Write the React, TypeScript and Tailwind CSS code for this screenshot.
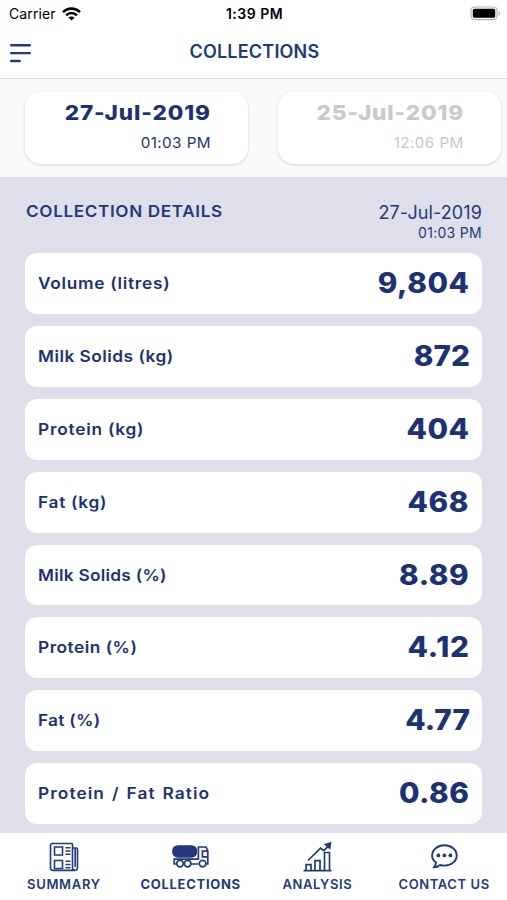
import type { ReactNode } from "react";

interface Row {
  label: string;
  value: string;
  labelClass: string;
  valueClass: string;
}

const rows: Row[] = [
  { label: "Volume (litres)", value: "9,804", labelClass: "tracking-[0.65px]", valueClass: "tracking-[0.5px]" },
  { label: "Milk Solids (kg)", value: "872", labelClass: "tracking-[0.45px]", valueClass: "tracking-[0px]" },
  { label: "Protein (kg)", value: "404", labelClass: "tracking-[0.71px]", valueClass: "tracking-[0.5px]" },
  { label: "Fat (kg)", value: "468", labelClass: "tracking-[0.65px]", valueClass: "tracking-[0.6px]" },
  { label: "Milk Solids (%)", value: "8.89", labelClass: "tracking-[0.24px]", valueClass: "tracking-[0.5px]" },
  { label: "Protein (%)", value: "4.12", labelClass: "tracking-[0.45px]", valueClass: "tracking-[0.7px]" },
  { label: "Fat (%)", value: "4.77", labelClass: "tracking-[0.25px]", valueClass: "tracking-[0px]" },
  { label: "Protein / Fat Ratio", value: "0.86", labelClass: "tracking-[1px] [word-spacing:1.4px]", valueClass: "tracking-[0.4px]" },
];

function StatusBar() {
  return (
    <div className="flex h-[27px] items-center justify-between pl-[9px] pr-[6px] text-black">
      <div className="flex w-[180px] items-center gap-[6px]">
        <span className="text-[14px] leading-none tracking-[0.1px]">Carrier</span>
        <svg width="19" height="14" viewBox="0 0 19 14" fill="none" stroke="currentColor" strokeWidth="2.6">
          <path d="M1 5.2C5.8.4 13.2.4 18 5.2" />
          <path d="M4.1 8.3c3.1-3 7.7-3 10.8 0" />
          <path d="M9.5 13.6 6.4 10.6c1.8-1.6 4.4-1.6 6.2 0Z" fill="currentColor" stroke="none" />
        </svg>
      </div>
      <span className="mr-[1px] text-[14px] leading-none font-semibold tracking-[0.5px] whitespace-nowrap">1:39 PM</span>
      <div className="flex w-[180px] justify-end">
        <svg width="31" height="15" viewBox="0 0 31 15" fill="none">
          <rect x="1" y="1" width="26" height="12.6" rx="3.5" stroke="#b5b5b5" strokeWidth="1.2" />
          <rect x="2.8" y="2.8" width="22.4" height="9" rx="1.6" fill="#000" />
          <path d="M28.6 5.2c2 .7 2 3.6 0 4.3Z" fill="#b5b5b5" />
        </svg>
      </div>
    </div>
  );
}

function Header() {
  return (
    <header className="flex h-[52px] items-center border-b border-[#dcdcdc] pl-[10px]">
      <svg width="22" height="20" viewBox="0 0 22 20" stroke="#223a7b" strokeWidth="2.4" strokeLinecap="round">
        <path d="M1.2 2.2h18.6M1.2 10.1h18.6M1.2 18h8.4" />
      </svg>
      <h1 className="ml-[157.5px] text-[18px] leading-none font-semibold tracking-[0.2px] -mt-px">COLLECTIONS</h1>
    </header>
  );
}

function DateCard({ date, time, active }: { date: string; time: string; active?: boolean }) {
  return (
    <button
      className={`flex h-[73px] w-[223px] shrink-0 flex-col items-end rounded-[16px] bg-white pr-[37px] pt-[10px] shadow-[0_1px_3px_rgba(0,0,0,0.16)] ${
        active ? "text-[#1d3274]" : "text-[#c9c9c9]"
      }`}
    >
      <span className="origin-right scale-x-110 text-[20.5px] leading-[24px] font-extrabold tracking-[0.8px]">{date}</span>
      <span className="mt-[9px] origin-right scale-x-105 text-[14.5px] leading-[18px] tracking-[0.4px]">{time}</span>
    </button>
  );
}

function DetailRow({ row }: { row: Row }) {
  return (
    <li className="flex h-[60.9px] items-center justify-between rounded-[12px] bg-white pl-[13px] pr-[12.5px] pb-px">
      <span className={`origin-left scale-x-[1.08] text-[16px] font-semibold ${row.labelClass}`}>{row.label}</span>
      <span className={`origin-right scale-x-[1.06] text-[28px] font-extrabold ${row.valueClass}`}>{row.value}</span>
    </li>
  );
}

function SummaryIcon() {
  return (
    <svg width="30" height="30" viewBox="0 0 30 30" fill="none" stroke="currentColor" strokeWidth="1.6">
      <path d="M3 1.5h19.5a1 1 0 0 1 1 1v23.3a2.5 2.5 0 0 0 5 0V7a1 1 0 0 0-1-1h-4M26.2 6v19M1.5 3v22.8a2.5 2.5 0 0 0 2.5 2.6h22" />
      <path d="M1.5 3.2A1.7 1.7 0 0 1 3.2 1.5" />
      <path d="M5.5 5h8v8h-8zM5.5 18.5h8v8h-8zM16.5 5.7h5M16.5 9h5M16.5 12.3h5M16.5 19.2h5M16.5 22.5h5M16.5 25.8h5" />
    </svg>
  );
}

function TruckIcon() {
  return (
    <svg width="37" height="23" viewBox="0 0 37 23" fill="none" stroke="currentColor" strokeWidth="1.7">
      <rect x="1" y="1" width="23.4" height="10.8" rx="4.8" fill="currentColor" />
      <path d="M4.5 19H2.2v-4.8H26M18.5 19h8M26.4 15V2h7.6l1.8 4v13h-2M35.5 6.2H30.4v5.6h5.2" />
      <g fill="#fff">
        <circle cx="8" cy="18.6" r="3.3" />
        <circle cx="15.6" cy="18.6" r="3.3" />
        <circle cx="30.6" cy="18.6" r="3.3" />
      </g>
    </svg>
  );
}

function AnalysisIcon() {
  return (
    <svg width="29" height="30" viewBox="0 0 29 30" fill="none" stroke="currentColor" strokeWidth="1.7">
      <path d="M.5 28.6h28M3 28.6v-6h5v6M12 28.6v-10h5v10M21.5 28.6V10.5h5v18.1" />
      <path d="M5 18.5 17.5 6.2l3.3 2.5 5.2-5.4" />
      <path d="m22.5 2.5 5-1.5-.8 5.2Z" fill="currentColor" />
    </svg>
  );
}

function ContactIcon() {
  return (
    <svg width="27" height="25" viewBox="0 0 27 25" fill="none" stroke="currentColor" strokeWidth="1.9" strokeLinejoin="round">
      <path d="M5 18.5C2.6 16.7 1.1 14.2 1.1 11.4 1.1 5.7 6.6 1.2 13.4 1.2s12.3 4.5 12.3 10.2-5.5 10.2-12.3 10.2c-1.5 0-3-.2-4.3-.6-1.7 1.5-3.8 2.4-6.4 2.4 1.4-1.3 2.2-2.9 2.3-4.9Z" />
      <g fill="currentColor" stroke="none">
        <circle cx="7.4" cy="11.4" r="1.9" />
        <circle cx="13.4" cy="11.4" r="1.9" />
        <circle cx="19.4" cy="11.4" r="1.9" />
      </g>
    </svg>
  );
}

function NavItem({ label, labelClass, children }: { label: string; labelClass: string; children: ReactNode }) {
  return (
    <a className="flex flex-1 flex-col items-center pt-[8px]">
      <span className="flex h-[31px] items-center pl-px">{children}</span>
      <span className={`mt-[4px] pl-px text-[13px] leading-[16px] whitespace-nowrap ${labelClass}`}>{label}</span>
    </a>
  );
}

export default function App() {
  return (
    <div className="flex h-[900px] w-[507px] flex-col overflow-hidden bg-white font-['Inter',sans-serif] text-[#223a7b]">
      <StatusBar />
      <Header />

      <div className="flex h-[98px] shrink-0 gap-[30px] bg-[#fbf9fa] pl-[25px] pt-[12px]">
        <DateCard date="27-Jul-2019" time="01:03 PM" active />
        <DateCard date="25-Jul-2019" time="12:06 PM" />
      </div>

      <main className="h-[656px] shrink-0 bg-[#dfdfeb] px-[25px] pt-[24px]">
        <div className="flex h-[52px] justify-between">
          <h2 className="origin-left scale-x-[1.07] pl-px text-[16px] leading-[20px] font-semibold tracking-[0.6px]">
            COLLECTION DETAILS
          </h2>
          <div className="flex flex-col items-end pt-px">
            <span className="text-[18px] leading-[22px] tracking-[0.1px]">27-Jul-2019</span>
            <span className="text-[14px] leading-[18px] tracking-[0.3px]">01:03 PM</span>
          </div>
        </div>
        <ul className="flex flex-col gap-[12px] text-[#1d3274]">
          {rows.map((row) => (
            <DetailRow key={row.label} row={row} />
          ))}
        </ul>
      </main>

      <nav className="flex h-[67px] shrink-0 bg-white">
        <NavItem label="SUMMARY" labelClass="font-semibold tracking-[0.7px]">
          <SummaryIcon />
        </NavItem>
        <NavItem label="COLLECTIONS" labelClass="font-bold tracking-[0.7px]">
          <TruckIcon />
        </NavItem>
        <NavItem label="ANALYSIS" labelClass="font-semibold tracking-[0.6px]">
          <AnalysisIcon />
        </NavItem>
        <NavItem label="CONTACT US" labelClass="font-semibold tracking-[0.6px]">
          <ContactIcon />
        </NavItem>
      </nav>
    </div>
  );
}
